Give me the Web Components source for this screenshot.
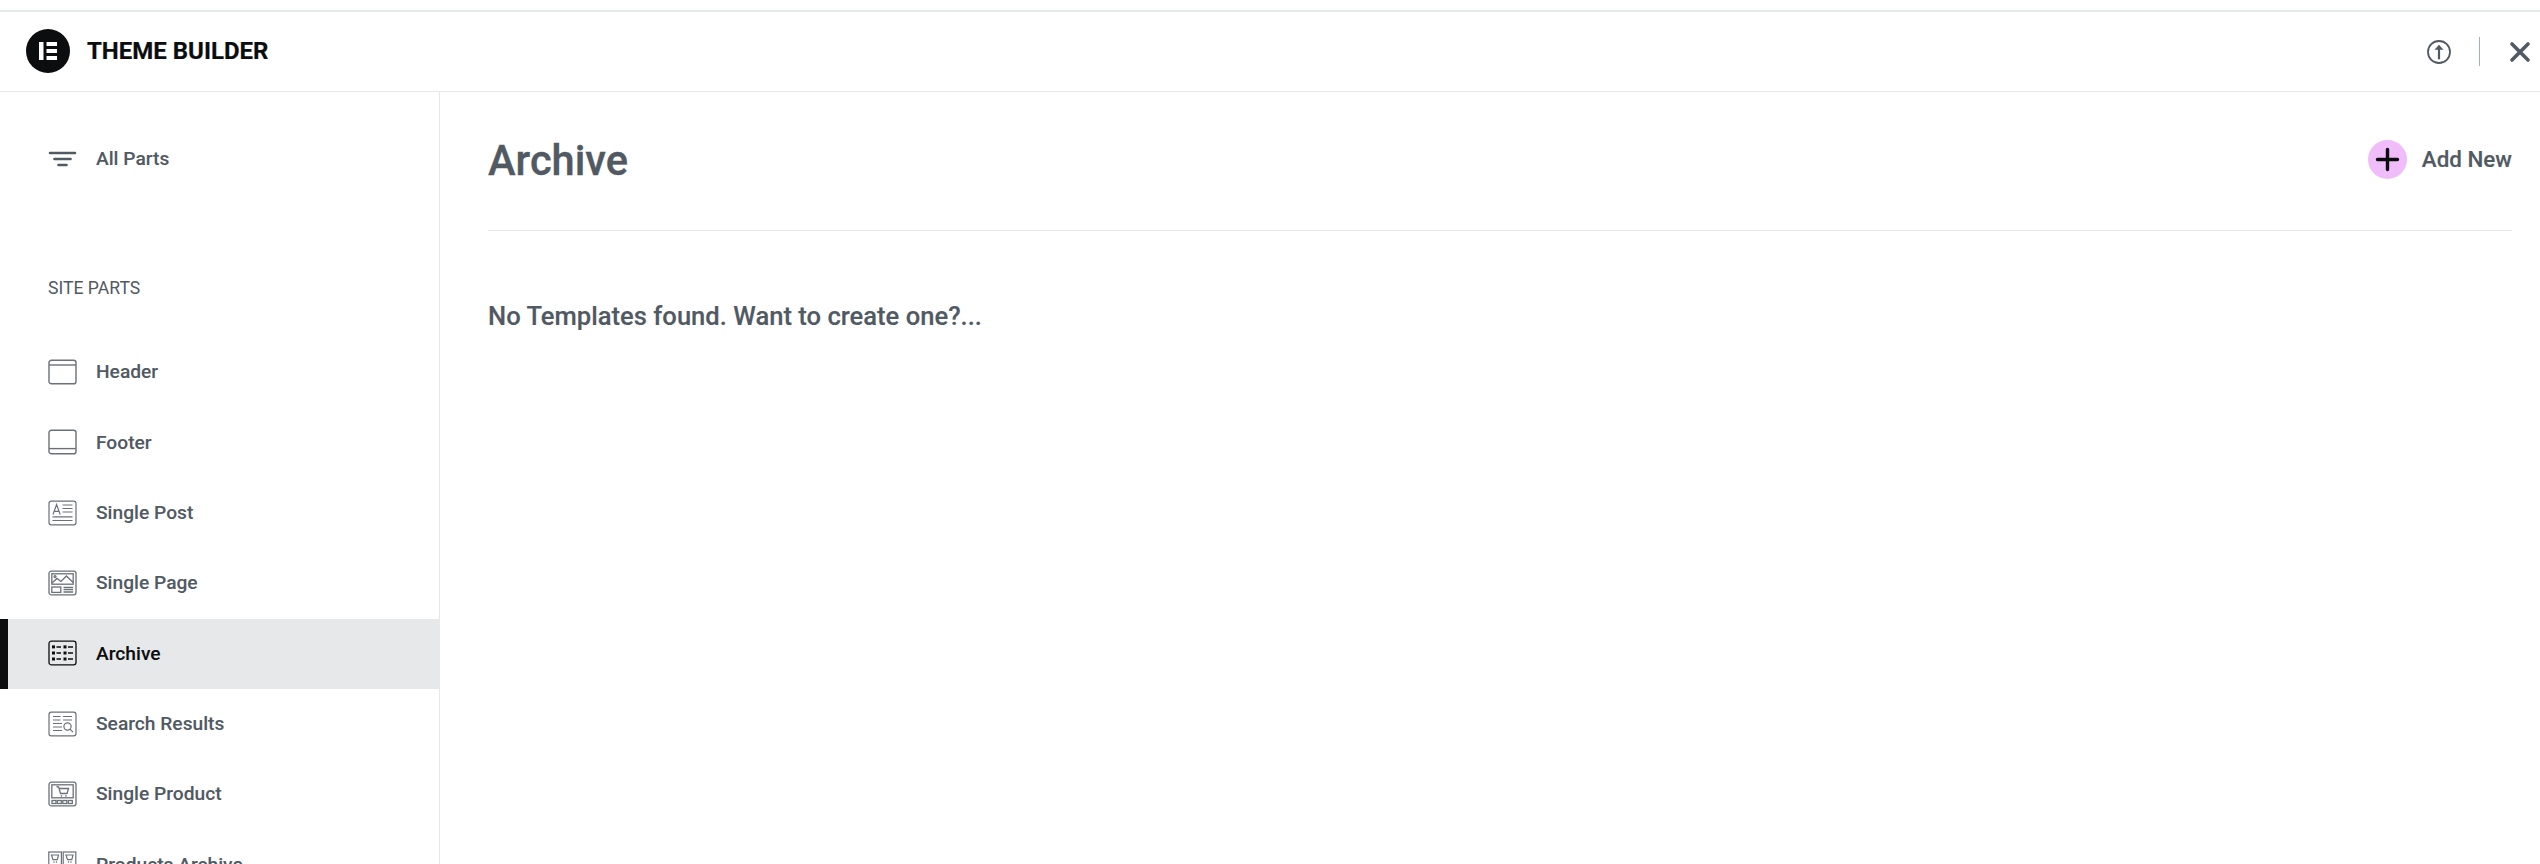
<!DOCTYPE html>
<html lang="en"><head><meta charset="utf-8"><title>Theme Builder</title>
<style>html,body{margin:0;height:100%;background:#fff;overflow:hidden}body{font-family:Roboto,"Liberation Sans",sans-serif;color:#515962}</style>
</head><body>
<tb-app>
  <tb-topbar slot="top" heading="THEME BUILDER"></tb-topbar>
  <tb-sidebar slot="side">
    <tb-item icon="all" class="all">All Parts</tb-item>
    <tb-label>SITE PARTS</tb-label>
    <tb-item icon="header">Header</tb-item>
    <tb-item icon="footer">Footer</tb-item>
    <tb-item icon="post">Single Post</tb-item>
    <tb-item icon="page">Single Page</tb-item>
    <tb-item icon="archive" active>Archive</tb-item>
    <tb-item icon="search">Search Results</tb-item>
    <tb-item icon="product">Single Product</tb-item>
    <tb-item icon="products">Products Archive</tb-item>
  </tb-sidebar>
  <tb-main slot="main" heading="Archive">No Templates found. Want to create one?...</tb-main>
</tb-app>
<script>
const ICONS={
all:'<g fill="none" stroke="currentColor" stroke-linecap="round" stroke-width="2.600"><path d="M2 7h25M6.500 13h16M10.500 19h8"/></g>',
header:'<g fill="none" stroke="currentColor" stroke-width="1.400" opacity=".85"><rect x="1" y="1.200" width="27" height="23.600" rx="2.400"/><path d="M1 6h27"/></g>',
footer:'<g fill="none" stroke="currentColor" stroke-width="1.400" opacity=".85"><rect x="1" y="1.200" width="27" height="23.600" rx="2.400"/><path d="M1 19.600h27"/></g>',
post:'<g fill="none" stroke="currentColor" stroke-width="1.200" opacity=".85"><rect x="1" y="1.200" width="27" height="23.600" rx="2.400"/><path d="M5 14.500l3.600-10 3.600 10M6.200 11.300h5M14.500 5h10M14.500 8.500h10M14.500 12h10M4.500 16.800h20M4.500 20.500h20"/></g>',
page:'<g fill="none" stroke="currentColor" stroke-width="1.300" opacity=".85"><rect x="1" y="1.200" width="27" height="23.600" rx="2.400"/><rect x="3.800" y="3.800" width="21.400" height="10.400"/><path d="M4 13l5-4.600 4 3 5.400-5.400 6.800 6.500"/><circle cx="7" cy="6.600" r="1"/><rect x="3.800" y="17" width="9" height="5.400"/><path d="M15.500 17.500h9.700M15.500 19.700h9.700M15.500 22h9.700"/></g>',
archive:'<g fill="none" stroke="currentColor" stroke-width="1.300"><rect x="1" y="1.200" width="27" height="23.600" rx="2.400"/><path stroke-width="1.500" d="M8.500 7h4.500M8.500 13h4.500M8.500 19h4.500M20 7h5M20 13h5M20 19h5"/></g><g fill="currentColor"><rect x="4" y="5.400" width="3" height="3"/><rect x="4" y="11.500" width="3" height="3"/><rect x="4" y="17.500" width="3" height="3"/><rect x="15.500" y="5.400" width="3" height="3"/><rect x="15.500" y="11.500" width="3" height="3"/><rect x="15.500" y="17.500" width="3" height="3"/></g>',
search:'<g fill="none" stroke="currentColor" stroke-width="1.200" opacity=".85"><rect x="1" y="1.200" width="27" height="23.600" rx="2.400"/><path d="M5 5.500h7.500M15 5.500h9M5 9h7.500M15 9h9M5 12.500h9M5 16h9M5 19.500h9"/><circle cx="19.500" cy="15.500" r="3.600"/><path d="M22 18.200l3 3"/></g>',
product:'<g fill="none" stroke="currentColor" stroke-width="1.300" opacity=".85"><rect x="1" y="1.200" width="27" height="23.600" rx="2.400"/><rect x="3.800" y="3.800" width="21.400" height="13"/><path d="M8.500 5.500l2.200.500 1.800 6.500h6.500l1.500-5H11.200"/><rect x="4" y="19.500" width="4" height="3"/><rect x="9.300" y="19.500" width="4" height="3"/><rect x="14.800" y="19.500" width="4" height="3"/><rect x="20.300" y="19.500" width="4" height="3"/></g><circle cx="13.500" cy="15" r=".8" fill="currentColor"/><circle cx="18" cy="15" r=".8" fill="currentColor"/>',
products:'<g fill="none" stroke="currentColor" stroke-width="1.200" opacity=".85"><rect x=".8" y="1" width="12.600" height="13"/><rect x="15.200" y="1" width="12.600" height="13"/><path d="M3.500 4h7l-1.200 4.600H5zM18 4h7l-1.200 4.600h-4.300z"/></g><circle cx="6" cy="11" r=".7" fill="currentColor"/><circle cx="8.500" cy="11" r=".7" fill="currentColor"/><circle cx="20.500" cy="11" r=".7" fill="currentColor"/><circle cx="23" cy="11" r=".7" fill="currentColor"/>'
};
class Base extends HTMLElement{
  render(html){ (this.shadowRoot||this.attachShadow({mode:'open'})).innerHTML=html; }
}
customElements.define('tb-app',class extends Base{connectedCallback(){this.render(`<style>
:host{display:flex;flex-direction:column;height:864px;overflow:hidden;padding-top:10px;box-sizing:border-box}
.top{border-top:2px solid #e6e8ea;display:block}
.body{display:flex;flex:1;min-height:0}
</style><div class="top"><slot name="top"></slot></div><div class="body"><slot name="side"></slot><slot name="main"></slot></div>`)}});
customElements.define('tb-topbar',class extends Base{connectedCallback(){this.render(`<style>
:host{display:flex;align-items:center;height:79px;border-bottom:1px solid #e6e8ea;padding:0 9px 0 26px;box-sizing:content-box}
.logo{width:44px;height:44px;flex:none;margin-bottom:1px}
h1{margin:0 0 2px 17px;font:700 24px/1 Roboto,sans-serif;color:#0c0d0e;flex:1;-webkit-text-stroke:.2px #0c0d0e}
.up{width:24px;height:24px;flex:none}
.sep{width:1px;height:29px;background:#a4afb7;margin:0 29px 0 28px}
.x{width:22px;height:22px;flex:none}
</style>
<svg class="logo" viewBox="0 0 44 44"><circle cx="22" cy="22" r="22" fill="#0c0d0e"/><path fill="#fff" d="M13 13h4.500v18H13zM20.500 13h10.500v4H20.500zM20.500 20h10.500v4H20.500zM20.500 27h10.500v4H20.500z"/></svg>
<h1>${this.getAttribute('heading')}</h1>
<svg class="up" viewBox="0 0 24 24" fill="none" stroke="#515962" stroke-width="1.800" stroke-linecap="round"><circle cx="12" cy="12" r="11"/><path stroke-width="2.200" d="M12 18.500V8"/><path fill="#515962" stroke="none" d="M12 4.800l4.500 5H7.500z"/></svg>
<div class="sep"></div>
<svg class="x" viewBox="0 0 22 22" fill="none" stroke="#515962" stroke-width="3.600" stroke-linecap="round"><path d="M3 3l16 16M19 3L3 19"/></svg>`)}});
customElements.define('tb-sidebar',class extends Base{connectedCallback(){this.render(`<style>
:host{display:block;width:440px;flex:none;box-sizing:border-box;border-right:1px solid #e6e8ea;padding-top:32px}
::slotted(.all){padding-bottom:1px}
</style><slot></slot>`)}});
customElements.define('tb-label',class extends Base{connectedCallback(){this.render(`<style>
:host{display:block;font:400 17.6px/20px Roboto,sans-serif;color:#515962;padding:0 48px;margin:83.500px 0 40px}
</style><slot></slot>`)}});
customElements.define('tb-item',class extends Base{connectedCallback(){const a=this.hasAttribute('active');const i=this.getAttribute('icon');const pb=this.classList.contains('all')?1:2;this.render(`<style>
:host{display:flex;align-items:center;height:70.33px;padding:0 0 ${pb}px 48px;box-sizing:border-box;position:relative;font:500 19.2px/1 Roboto,sans-serif;color:${a?'#0c0d0e':'#515962'};background:${a?'#e6e8ea':'transparent'};-webkit-text-stroke:.08px currentColor}
:host::before{content:"";display:${a?'block':'none'};position:absolute;left:0;top:0;bottom:0;width:8px;background:#0c0d0e}
svg{width:29px;height:26px;flex:none;margin-right:19px}
</style><svg viewBox="0 0 29 26">${ICONS[i]}</svg><slot></slot>`)}});
customElements.define('tb-main',class extends Base{connectedCallback(){this.render(`<style>
:host{display:block;flex:1;min-width:0;padding:0 28px 0 48px}
.head{display:flex;align-items:center;justify-content:space-between;height:135px;padding-bottom:3px;border-bottom:1px solid #e6e8ea}
h2{margin:3px 0 0;font:500 41.6px/1 Roboto,sans-serif;color:#515962;-webkit-text-stroke:.35px #515962}
.add{display:flex;align-items:center;font:500 22.4px/1 Roboto,sans-serif;color:#515962;-webkit-text-stroke:.15px #515962}
.plus{width:39px;height:39px;flex:none;margin-right:15px}
p{margin:70px 0 0;font:500 25.6px/30px Roboto,sans-serif;color:#515962;-webkit-text-stroke:.15px #515962}
</style><div class="head"><h2>${this.getAttribute('heading')}</h2><div class="add"><svg class="plus" viewBox="0 0 39 39"><circle cx="19.500" cy="19.500" r="19.500" fill="#f0bdfa"/><path d="M9.500 19.500h20M19.500 9.500v20" stroke="#0c0d0e" stroke-width="3.400" stroke-linecap="round"/></svg>Add New</div></div><p><slot></slot></p>`)}});
</script>
</body></html>
